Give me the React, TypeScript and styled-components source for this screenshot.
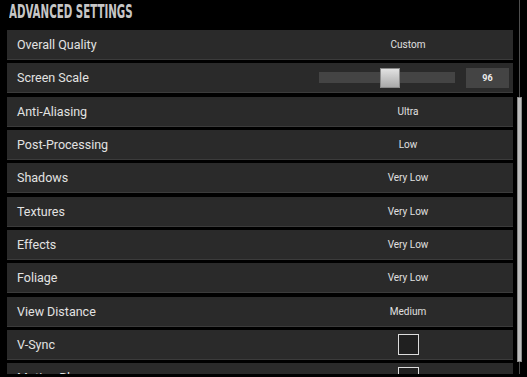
import styled, { createGlobalStyle } from "styled-components";

type Setting = {
  label: string;
  kind: "text" | "slider" | "check";
  value?: string;
  amount?: number;
};

const settings: Setting[] = [
  { label: "Overall Quality", kind: "text", value: "Custom" },
  { label: "Screen Scale", kind: "slider", amount: 96 },
  { label: "Anti-Aliasing", kind: "text", value: "Ultra" },
  { label: "Post-Processing", kind: "text", value: "Low" },
  { label: "Shadows", kind: "text", value: "Very Low" },
  { label: "Textures", kind: "text", value: "Very Low" },
  { label: "Effects", kind: "text", value: "Very Low" },
  { label: "Foliage", kind: "text", value: "Very Low" },
  { label: "View Distance", kind: "text", value: "Medium" },
  { label: "V-Sync", kind: "check" },
  { label: "Motion Blur", kind: "check" },
];

const App = () => {
  return (
    <>
      <GlobalStyle />
      <Screen>
        <Content>
          <TitleBar>
            <Title>ADVANCED SETTINGS</Title>
          </TitleBar>
          <List>
            {settings.map((s) => (
              <Row key={s.label}>
                <Label>{s.label}</Label>
                <ValueCell>
                  {s.kind === "text" && <Value>{s.value}</Value>}
                  {s.kind === "slider" && (
                    <>
                      <Track>
                        <Thumb />
                      </Track>
                      <NumberBox>{s.amount}</NumberBox>
                    </>
                  )}
                  {s.kind === "check" && <CheckBox />}
                </ValueCell>
              </Row>
            ))}
          </List>
        </Content>
        <ScrollBar>
          <ScrollLine $grow={98} />
          <ScrollThumb />
          <ScrollLine $grow={12} />
        </ScrollBar>
      </Screen>
    </>
  );
};

export default App;

const GlobalStyle = createGlobalStyle`
  html, body {
    margin: 0;
    padding: 0;
    background: #000;
  }
  body {
    font-family: Roboto, "Noto Sans", sans-serif;
  }
`;

const Screen = styled.div`
  display: flex;
  width: 527px;
  height: 374px;
  overflow: hidden;
  background: #000;
`;

const Content = styled.div`
  flex: 1;
  display: flex;
  flex-direction: column;
  padding-left: 7px;
  overflow: hidden;
`;

const TitleBar = styled.div`
  flex: none;
  height: 30px;
  padding: 1px 0 0 2px;
  box-sizing: border-box;
`;

const Title = styled.h1`
  display: inline-block;
  margin: 0;
  font-family: "DejaVu Sans Condensed", "DejaVu Sans", sans-serif;
  font-stretch: condensed;
  font-weight: bold;
  font-size: 20px;
  line-height: 21px;
  color: #c6c6c6;
  transform: scaleX(0.57);
  transform-origin: left top;
  white-space: nowrap;
`;

const List = styled.div`
  flex: none;
  display: flex;
  flex-direction: column;
  gap: 3.35px;
`;

const Row = styled.div`
  flex: none;
  display: flex;
  align-items: center;
  height: 30px;
  box-sizing: border-box;
  background: #2a2a2a;
  border-bottom: 1px solid #3b3b3b;
`;

const Label = styled.div`
  flex: 1;
  padding-left: 10px;
  font-size: 12.5px;
  color: #e2e2e2;
`;

const ValueCell = styled.div`
  width: 210px;
  height: 100%;
  display: flex;
  align-items: center;
  justify-content: center;
  padding-right: 4px;
  box-sizing: border-box;
`;

const Value = styled.span`
  font-size: 10px;
  color: #e0e0e0;
  margin-left: 4px;
`;

const Track = styled.div`
  width: 136px;
  height: 11px;
  margin-left: 16px;
  background: #444;
  display: flex;
  align-items: center;
  padding-left: 61px;
  box-sizing: border-box;
`;

const Thumb = styled.div`
  width: 20px;
  height: 20px;
  box-sizing: border-box;
  border: 1px solid #8a8a8a;
  background: linear-gradient(#e2e2e2, #a9a9a9);
`;

const NumberBox = styled.div`
  width: 43px;
  height: 20px;
  margin-left: 11px;
  background: #444;
  color: #eee;
  font-size: 9px;
  font-weight: bold;
  display: flex;
  align-items: center;
  justify-content: center;
`;

const CheckBox = styled.div`
  width: 21px;
  height: 21px;
  margin-left: 4px;
  box-sizing: border-box;
  border: 1px solid #dcdcdc;
  background: #202020;
`;

const ScrollBar = styled.div`
  width: 14px;
  display: flex;
  flex-direction: column;
  align-items: center;
  padding-right: 1px;
  box-sizing: border-box;
`;

const ScrollLine = styled.div<{ $grow: number }>`
  flex: ${(p) => p.$grow};
  width: 1px;
  background: #4e4e4e;
`;

const ScrollThumb = styled.div`
  flex: 264;
  width: 5px;
  box-sizing: border-box;
  border: 1px solid #888;
  background: #bdbdbd;
`;
